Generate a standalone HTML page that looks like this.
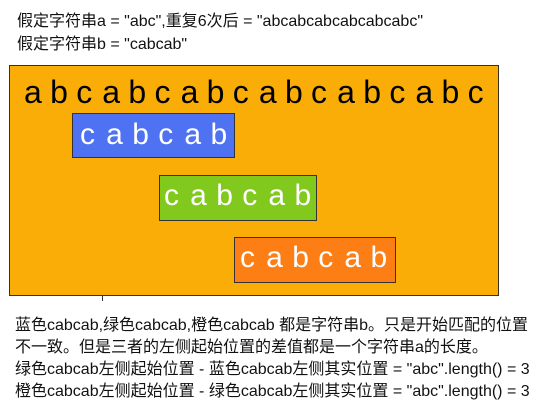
<!DOCTYPE html>
<html><head><meta charset="utf-8"><style>
body{margin:0;width:541px;height:412px;background:#fff;position:relative;overflow:hidden;font-family:"Liberation Sans","Noto Sans CJK SC",sans-serif;}
.t{position:absolute;left:17px;font-size:16px;color:#111;white-space:nowrap;line-height:18px}
.box{position:absolute;box-sizing:border-box;border:1px solid #333}
.row{position:absolute;white-space:nowrap;font-size:32px;line-height:1}
.row span{display:inline-block;width:26.1px}
</style></head><body>
<div class="t" style="top:13px">假定字符串a = "abc",重复6次后 = "abcabcabcabcabcabc"</div>
<div class="t" style="top:36px">假定字符串b = "cabcab"</div>
<div class="box" style="left:9px;top:65px;width:490px;height:231px;background:#f9ad06;border:1px solid #3a3020"></div>
<div style="position:absolute;left:102px;top:295px;width:1px;height:6px;background:#333"></div>
<div class="row" style="left:24px;top:76px;color:#000"><span>a</span><span>b</span><span>c</span><span>a</span><span>b</span><span>c</span><span>a</span><span>b</span><span>c</span><span>a</span><span>b</span><span>c</span><span>a</span><span>b</span><span>c</span><span>a</span><span>b</span><span>c</span></div>
<div class="box" style="left:72px;top:113px;width:163px;height:45px;background:#4f72f2"></div>
<div class="row" style="left:80px;top:120px;color:#fff;font-size:30px"><span>c</span><span>a</span><span>b</span><span>c</span><span>a</span><span>b</span></div>
<div class="box" style="left:159px;top:175px;width:158px;height:46px;background:#82c91e"></div>
<div class="row" style="left:164px;top:181px;color:#fff;font-size:30px"><span>c</span><span>a</span><span>b</span><span>c</span><span>a</span><span>b</span></div>
<div class="box" style="left:234px;top:237px;width:162px;height:46px;background:#fd7e14"></div>
<div class="row" style="left:240px;top:243px;color:#fff;font-size:30px"><span>c</span><span>a</span><span>b</span><span>c</span><span>a</span><span>b</span></div>
<div class="t" style="top:317px;left:15px">蓝色cabcab,绿色cabcab,橙色cabcab 都是字符串b。只是开始匹配的位置</div>
<div class="t" style="top:339px;left:15px">不一致。但是三者的左侧起始位置的差值都是一个字符串a的长度。</div>
<div class="t" style="top:361px;left:15px">绿色cabcab左侧起始位置 - 蓝色cabcab左侧其实位置 = "abc".length() = 3</div>
<div class="t" style="top:383px;left:15px">橙色cabcab左侧起始位置 - 绿色cabcab左侧其实位置 = "abc".length() = 3</div>
</body></html>
